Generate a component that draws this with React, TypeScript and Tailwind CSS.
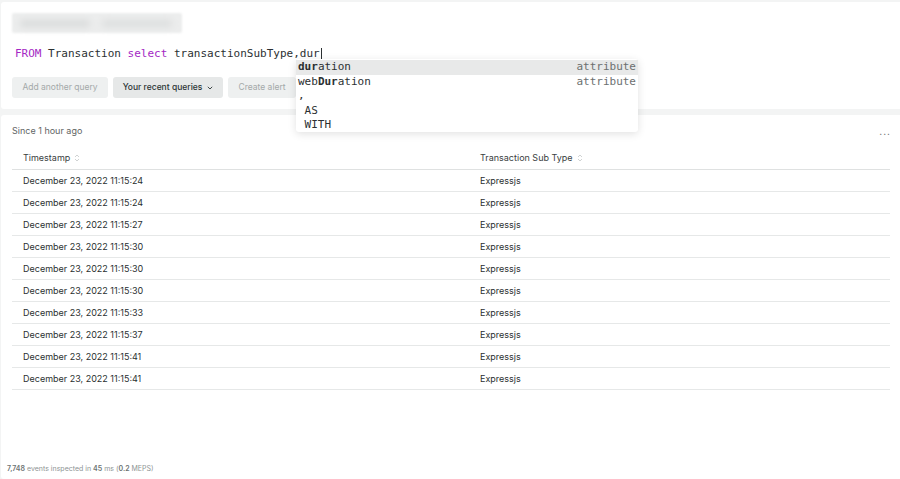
import React from 'react'

const rows = [
  '11:15:24',
  '11:15:24',
  '11:15:27',
  '11:15:30',
  '11:15:30',
  '11:15:30',
  '11:15:33',
  '11:15:37',
  '11:15:41',
  '11:15:41',
]

const SortIcon = () => (
  <svg width="6" height="8" viewBox="0 0 6 8" className="ml-1 inline-block">
    <path d="M1 3 L3 1 L5 3" fill="none" stroke="#c4c8c8" strokeWidth="0.8" />
    <path d="M1 5 L3 7 L5 5" fill="none" stroke="#c4c8c8" strokeWidth="0.8" />
  </svg>
)

const App = () => {
  return (
    <div
      className="w-[900px] h-[479px] bg-[#f3f4f4] pt-[2px] pl-[1px] flex flex-col gap-[6px] overflow-hidden"
      style={{ fontFamily: 'Inter, "Noto Sans", sans-serif' }}
    >
      {/* query panel */}
      <div className="relative bg-white rounded-l-[3px] h-[107px] px-[11px] pt-[11px]">
        <div className="w-[170px] h-[20px] bg-[#eceded] rounded-[2px] flex items-center gap-3 px-2 blur-[1px]">
          <div className="h-[7px] w-[70px] bg-[#d9dbdb] rounded blur-[3px]" />
          <div className="h-[7px] w-[70px] bg-[#dcdede] rounded blur-[3px]" />
        </div>

        <div
          className="mt-[14px] pl-[3px] text-[11px] leading-[14px] text-[#2b3032] flex items-center"
          style={{ fontFamily: '"DejaVu Sans Mono", monospace' }}
        >
          <span className="text-[#a428c4]">FROM</span>
          <span className="whitespace-pre"> Transaction </span>
          <span className="text-[#a428c4]">select</span>
          <span className="whitespace-pre"> transactionSubType,dur</span>
          <span className="w-px h-[13px] bg-[#2b3032] ml-px" />
        </div>

        <div className="mt-[16px] flex gap-[5px] text-[8.5px]">
          <button className="h-[21px] w-[96px] rounded-[3px] bg-[#eef0f0] text-[#a4a9a9]">
            Add another query
          </button>
          <button className="h-[21px] w-[110px] rounded-[3px] bg-[#e6e8e8] text-[#2c3535] font-medium flex items-center justify-center gap-[5px]">
            Your recent queries
            <svg width="6" height="4" viewBox="0 0 6 4">
              <path d="M0.8 0.8 L3 3 L5.2 0.8" fill="none" stroke="#2c3535" strokeWidth="0.9" />
            </svg>
          </button>
          <button className="h-[21px] w-[68px] rounded-[3px] bg-[#eef0f0] text-[#a4a9a9]">
            Create alert
          </button>
        </div>

        {/* autocomplete */}
        <div
          className="absolute left-[295px] top-[57px] w-[342px] h-[73px] bg-white rounded-[3px] shadow-[0_2px_8px_rgba(0,0,0,0.12)] z-10 text-[11px] leading-[14.5px] text-[#2b3032] py-[1px]"
          style={{ fontFamily: '"DejaVu Sans Mono", monospace' }}
        >
          <div className="flex justify-between bg-[#e8e9e9] pl-[2px] pr-[2px]">
            <span>
              <b>dur</b>ation
            </span>
            <span className="text-[#6c7070]">attribute</span>
          </div>
          <div className="flex justify-between pl-[2px] pr-[2px]">
            <span>
              web<b>Dur</b>ation
            </span>
            <span className="text-[#6c7070]">attribute</span>
          </div>
          <div className="pl-[2px]">,</div>
          <div className="pl-[2px] whitespace-pre"> AS</div>
          <div className="pl-[2px] whitespace-pre"> WITH</div>
        </div>
      </div>

      {/* results panel */}
      <div className="flex-1 bg-white rounded-l-[3px] px-[11px] pt-[10px] relative">
        <div className="flex justify-between items-center text-[9px] text-[#5f6565] h-[12px]">
          <span>Since 1 hour ago</span>
          <span className="text-[#5f6565] tracking-[1px] mr-[-2px] text-[10px] leading-none">...</span>
        </div>

        <div className="mt-[9px] w-[878px] text-[9px]">
          <div className="flex h-[24px] items-center border-b border-[#dfe1e1] text-[#3a4141]">
            <div className="w-[457px] pl-[11px] flex items-center">
              Timestamp <SortIcon />
            </div>
            <div className="pl-[11px] flex items-center">
              Transaction Sub Type <SortIcon />
            </div>
          </div>
          {rows.map((t, i) => (
            <div
              key={i}
              className="flex h-[22px] items-center border-b border-[#e6e8e8] text-[#2a3030]"
            >
              <div className="w-[457px] pl-[11px]">December 23, 2022 {t}</div>
              <div className="pl-[11px]">Expressjs</div>
            </div>
          ))}
        </div>

        <div className="absolute left-[6px] bottom-[5px] text-[7px] text-[#8e9494]">
          <b className="font-semibold text-[#6d7373]">7,748</b> events inspected in{' '}
          <b className="font-semibold text-[#6d7373]">45</b> ms (
          <b className="font-semibold text-[#6d7373]">0.2</b> MEPS)
        </div>
      </div>
    </div>
  )
}

export default App
